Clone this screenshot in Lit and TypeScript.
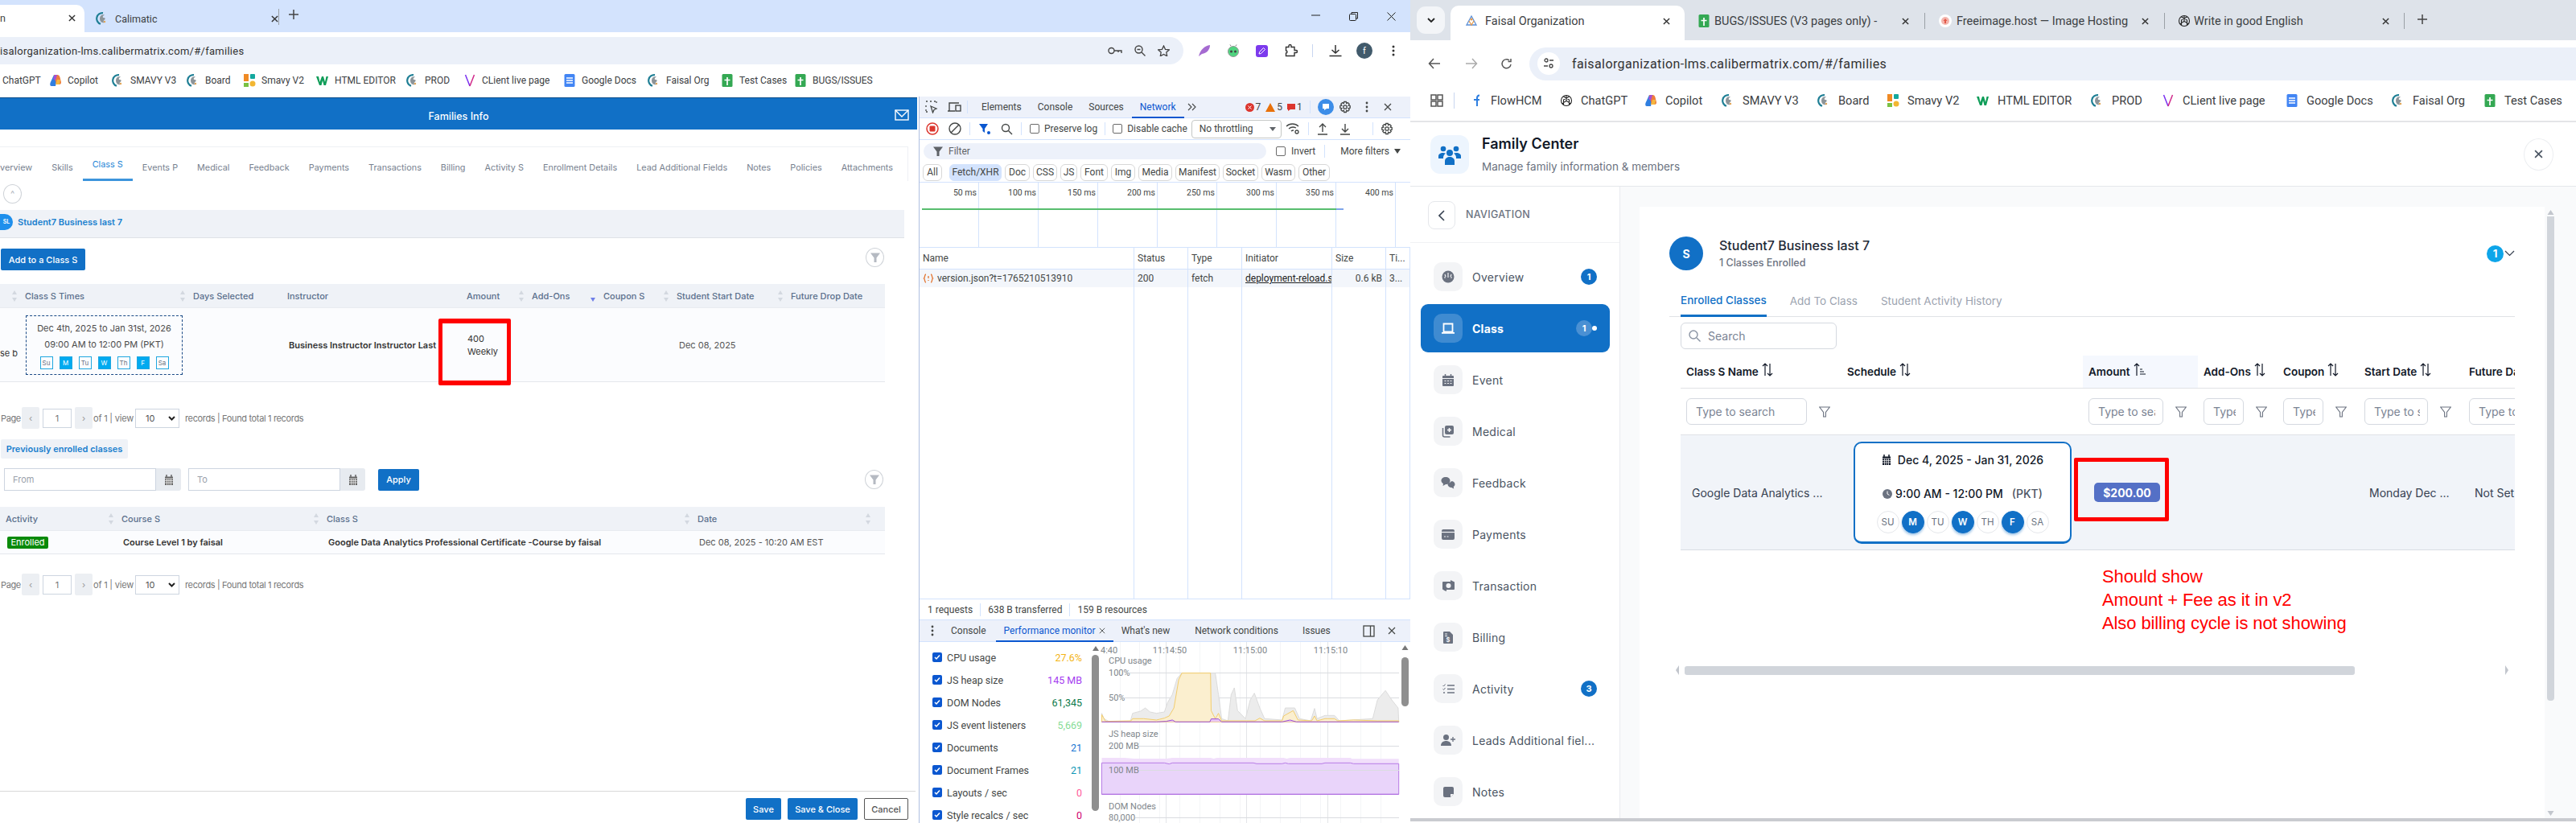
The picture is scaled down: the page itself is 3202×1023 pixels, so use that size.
import { LitElement, css, html, svg } from 'lit';
import { customElement } from 'lit/decorators.js';

// shared icons
const globe = html`<svg class="fav" viewBox="0 0 16 16"><path d="M9 1.2A7 7 0 0 0 6 14.8" fill="none" stroke="#1f7f95" stroke-width="2.2"/><path d="M11 3.5c-3-1-6 1-6 4.5s2.5 6 5.5 5c-1.5-1-1-2.500.5-3.500 1-1 1-2.500-1-2.500s-1.500-2.500 1-3.500z" fill="#8c9499"/><circle cx="11" cy="12" r="1.200" fill="#e0a458"/></svg>`;
const sheet = html`<svg class="fav" viewBox="0 0 16 16"><rect x="1.500" width="13" height="16" rx="1.500" fill="#34a853"/><path d="M8 4v10M4.500 7.500h7" stroke="#fff" stroke-width="1.700"/></svg>`;
const docs = html`<svg class="fav" viewBox="0 0 16 16"><rect x="1.500" width="13" height="16" rx="1.500" fill="#4285f4"/><path d="M4 5h8M4 8h8M4 11h8" stroke="#fff" stroke-width="1.500"/></svg>`;
const copilot = html`<svg class="fav" viewBox="0 0 16 16"><path d="M6 1h5l-3 14H3C1 15 1 13 1.500 11z" fill="#2f7fe0"/><path d="M6 1h4c2 0 3 1 3.500 3L15 10c.3 2-1 3-2.500 3H9z" fill="#ee7c3c"/><path d="M7 1h3L8 8 5 6z" fill="#a44fd6"/><path d="M10 7h4l-1 6H8z" fill="#f5b63f"/></svg>`;
const gpt = html`<svg class="fav" viewBox="0 0 16 16" fill="none" stroke="#222" stroke-width="1.100"><circle cx="8" cy="8" r="6.500"/><path d="M8 1.500v7l5.500 3M8 8.500l-5.500 3M4.500 3l7 4v6M11.500 3l-7 4v6"/></svg>`;
const smavy = html`<svg class="fav" viewBox="0 0 16 16"><rect x="1" width="6" height="9" fill="#f08a24"/><rect x="9" width="6" height="6" rx="1" fill="#13a89e"/><rect x="1" y="11" width="6" height="5" fill="#7ac143"/><circle cx="12" cy="12" r="3.500" fill="#f2b632"/></svg>`;
const wIcon = html`<svg class="fav" viewBox="0 0 16 16"><path d="M0 3h3l1.500 7L7 3h2l2 7 1.500-7H15l-3 11H9.500L8 8l-1.500 6H4z" fill="#0f9d58"/></svg>`;
const vIcon = html`<svg class="fav" viewBox="0 0 16 16" fill="none" stroke-width="1.500"><path d="M2.500 1L8 15" stroke="#7a2ff0"/><path d="M13.500 1L8 15" stroke="#d0298a"/></svg>`;
const flow = html`<svg class="fav" viewBox="0 0 16 16"><path d="M9 15V5c0-2 1-3.500 3-3.500M5 7h7" fill="none" stroke="#2f7fe0" stroke-width="2"/></svg>`;
const orgIcon = html`<svg class="fav" viewBox="0 0 16 16" fill="none" stroke-width="1.300"><path d="M8 2l6 11H2z" stroke="#5b8fd6"/><path d="M5 8l3 5 3-5" stroke="#e79a4a"/><circle cx="8" cy="6" r="1.600" fill="#e79a4a" stroke="none"/></svg>`;
const freeimg = html`<svg class="fav" viewBox="0 0 16 16"><circle cx="8" cy="8" r="8" fill="#fff"/><rect x="3" y="3" width="10" height="10" rx="5" fill="#f4b6ae"/><path d="M8 5l2.500 3H9v3H7V8H5.500z" fill="#e25a4a"/></svg>`;
const x = (size = 10, color = '#333', w = 1.6) => html`<svg width=${size} height=${size} viewBox="0 0 10 10" style="flex:none"><path d="M1 1l8 8M9 1l-8 8" stroke=${color} stroke-width=${w} fill="none"/></svg>`;
const funnel = (c = '#a9b0ba') => html`<svg width="14" height="14" viewBox="0 0 14 14"><path d="M1 1.500h12L8.500 7.500V13h-3V7.500z" fill=${c}/></svg>`;
const cal = (c = '#666') => html`<svg width="12" height="13" viewBox="0 0 12 13"><path d="M1 2.500h10V13H1z" fill=${c}/><path d="M3 0v3M9 0v3" stroke=${c} stroke-width="1.500"/><path d="M1 5h10M3.500 5v8M6 5v8M8.500 5v8M1 7.500h10M1 10h10" stroke="#fff" stroke-width=".7"/></svg>`;
const sort = (active = false) => html`<svg width="8" height="16" viewBox="0 0 8 16"><path d="M4 1l3 5H1z" fill=${active ? 'transparent' : '#d3d8e0'}/><path d="M4 15l3-5H1z" fill=${active ? '#6f7fe8' : '#d3d8e0'}/></svg>`;

type Mark = { label?: string; icon?: unknown; w: number };

const bookmarkBar = (items: Mark[], gap: number) => items.map(
    (b) => html`<div class="mark" style="width:${b.w}px;gap:${gap}px">${b.icon ?? ''}<span>${b.label}</span></div>`
);

const chromeStyles = css`
    .fav { width: 16px; height: 16px; flex: none; display: block; }
    .mark {
        display: flex;
        align-items: center;
        flex: none;
        font: 13px Roboto, sans-serif;
        color: #3c4043;
        white-space: nowrap;
    }
`;

@customElement('left-page')
class LeftPage extends LitElement {
    static styles = css`
        :host {
            display: flex;
            flex-direction: column;
            position: relative;
            width: 1142px;
            height: 903px;
            font-family: Inter, 'Liberation Sans', sans-serif;
            font-size: 11px;
            color: #4a5462;
            background: #fff;
            overflow: hidden;
        }

        .bar {
            height: 40px;
            flex: none;
            background: #1170c6;
            border-top: 1px solid #0d4f8d;
            box-sizing: border-box;
            margin-top: 1px;
            padding-top: 5px;
            display: grid;
            grid-template-columns: 1fr auto 1fr;
            align-items: center;
            color: #fff;
            font-size: 12.5px;
            font-weight: 500;
            margin-right: 2px;
        }

        .bar span { grid-column: 2; }
        .bar svg { justify-self: end; margin-right: 10px; margin-top: -3px; }

        .tabs {
            margin-top: 21px;
            height: 43px;
            width: 1129px;
            box-sizing: border-box;
            border-top: 1px solid #eef0f4;
            border-right: 1px solid #eef0f4;
            display: flex;
            gap: 24px;
            align-items: stretch;
            flex: none;
            white-space: nowrap;
            color: #77818f;
            font-size: 10.85px;
        }

        .tabs div {
            display: flex;
            align-items: center;
            padding-top: 8px;
            box-sizing: border-box;
            flex: none;
        }

        .tabs .on {
            color: #1f86d6;
            border-bottom: 3px solid #3d95dc;
            padding: 2px 12px 0;
            margin: 0 -12px;
        }

        .round {
            width: 23px;
            height: 24px;
            border: 1px solid #cfd3d8;
            border-radius: 50%;
            box-sizing: border-box;
            display: grid;
            place-items: center;
            color: #aab0b8;
            background: #fff;
            flex: none;
        }

        .collapse {
            height: 36px;
            padding: 4px 0 0 4px;
            box-sizing: border-box;
            flex: none;
        }

        .student {
            height: 35px;
            width: 1124px;
            flex: none;
            background: #eff2f7;
            border-bottom: 1px solid #dfe2e6;
            box-sizing: border-box;
            padding-bottom: 5px;
            display: flex;
            align-items: center;
            gap: 6px;
            color: #1a7fce;
            font-weight: 600;
            font-size: 11px;
        }

        .ava {
            width: 16px;
            height: 20px;
            background: #1e8fec;
            border-radius: 0 10px 10px 0;
            color: #fff;
            font-size: 7px;
            display: grid;
            place-items: center;
            flex: none;
        }

        .actions {
            height: 57px;
            flex: none;
            display: flex;
            justify-content: space-between;
            align-items: flex-start;
            padding: 13px 1px 0 1px;
            box-sizing: border-box;
            width: 1100px;
        }

        .btn {
            background: #1170c6;
            color: #fff;
            border-radius: 2px;
            display: grid;
            place-items: center;
            font-size: 11px;
            font-weight: 500;
            height: 27px;
            box-sizing: border-box;
        }

        .thead {
            display: grid;
            height: 30px;
            width: 1100px;
            flex: none;
            background: #eff2f7;
            border-bottom: 1px solid #e8ebf0;
            box-sizing: border-box;
            align-items: center;
            color: #5a6f8c;
            font-weight: 500;
            white-space: nowrap;
            font-size: 11px;
        }

        .thead > div { display: flex; align-items: center; }
        .thead .sorter { width: 19px; display: grid; justify-items: center; margin: 0 4px 0 -4px; flex: none; }
        .thead .back { margin: 0 4px 0 -23px; }
        .classes { grid-template-columns: 12px 209px 117px 223px 81px 89px 91px 142px 136px; }
        .prev { grid-template-columns: 7px 144px 255px 461px 225px 8px; }

        .row {
            display: grid;
            grid-template-columns: 32px 327px 222px 263px 1fr;
            align-items: center;
            width: 1100px;
            height: 92px;
            flex: none;
            background: #fbfcfe;
            border-bottom: 1px solid #e4e7ec;
            box-sizing: border-box;
            white-space: nowrap;
            color: #555;
        }

        .cut { overflow: hidden; color: #333; padding-top: 20px; }

        .sched {
            width: 195px;
            height: 74px;
            border: 1px dashed #1a4a86;
            box-sizing: border-box;
            display: flex;
            flex-direction: column;
            align-items: center;
            color: #4b4b4b;
            padding-top: 9px;
        }

        .sched p { margin: 0 0 7px; line-height: 13px; }

        .days { display: flex; gap: 8px; margin-top: 1px; }

        .days span {
            width: 16px;
            height: 16px;
            box-sizing: border-box;
            border: 1px solid #1fa7e0;
            display: grid;
            place-items: center;
            font-size: 8px;
            color: #6b7280;
        }

        .days .on { background: #00aaf0; color: #fff; }

        .instr { color: #333; font-weight: 600; overflow: hidden; max-width: 186px; }

        .amount { color: #333; line-height: 16px; }

        .pager {
            display: flex;
            align-items: center;
            height: 27px;
            flex: none;
            font-size: 11px;
            color: #777;
            white-space: nowrap;
            padding-left: 1px;
        }

        .pager .lead { width: 21px; overflow: visible; letter-spacing: -.4px; }
        .pager .view { width: 52px; letter-spacing: -.2px; }
        .pager .found { letter-spacing: -.35px; }

        .pager .arrow {
            width: 22px;
            height: 27px;
            background: #eceff3;
            border-radius: 2px;
            display: grid;
            place-items: center;
            color: #999;
            margin-left: 5px;
        }

        .pager .next { margin: 0 1px 0 4px; }

        .pager .num {
            width: 36px;
            height: 24px;
            border: 1px solid #cdd5e0;
            box-sizing: border-box;
            display: grid;
            place-items: center;
            margin: 0 0 0 4px;
        }

        .pager .sel {
            width: 55px;
            height: 24px;
            border: 1px solid #cdd5e0;
            box-sizing: border-box;
            display: flex;
            align-items: center;
            justify-content: space-between;
            padding: 0 4px 0 12px;
            margin: 0 7px 0 0;
            color: #555;
        }

        .pill {
            width: 158px;
            height: 24px;
            margin: 13px 0 12px 1px;
            background: #eff2f7;
            border-radius: 2px;
            color: #1a7fce;
            font-weight: 600;
            display: grid;
            place-items: center;
            flex: none;
            box-sizing: border-box;
        }

        .range {
            display: flex;
            height: 28px;
            flex: none;
            width: 1100px;
            padding-left: 5px;
            box-sizing: border-box;
            align-items: center;
        }

        .date {
            width: 189px;
            height: 28px;
            border: 1px solid #cdd5e0;
            box-sizing: border-box;
            color: #9aa1ab;
            display: flex;
            align-items: center;
            padding-left: 10px;
        }

        .addon {
            width: 31px;
            height: 28px;
            background: #e7ebf0;
            display: grid;
            place-items: center;
            border-radius: 0 3px 3px 0;
            margin-right: 9px;
        }

        .rowlow {
            display: grid;
            grid-template-columns: 9px 144px 255px 461px 1fr;
            width: 1100px;
            height: 29px;
            flex: none;
            align-items: center;
            background: #fbfcfe;
            border-bottom: 1px solid #e4e7ec;
            box-sizing: border-box;
            white-space: nowrap;
            color: #333;
            font-weight: 600;
        }

        .badge {
            width: 51px;
            height: 15px;
            background: #0a8a0a;
            border-radius: 2px;
            color: #fff;
            font-weight: 400;
            display: grid;
            place-items: center;
        }

        .foot {
            margin-top: auto;
            height: 40px;
            flex: none;
            border-top: 1px solid #d9d9d9;
            box-sizing: border-box;
            display: flex;
            justify-content: flex-end;
            gap: 8px;
            padding: 8px 9px 0 0;
            width: 1138px;
        }

        .ghost {
            background: #fff;
            color: #555;
            border: 1px solid #555;
        }

        .redbox {
            position: absolute;
            left: 545px;
            top: 276px;
            width: 90px;
            height: 83px;
            box-sizing: border-box;
            border: 5px solid #f00;
            border-top-width: 6px;
            border-bottom-width: 6px;
            border-radius: 2px;
        }
    `;

    pager() {
        return html`<div class="pager">
            <span class="lead">Page</span>
            <span class="arrow">‹</span><span class="num">1</span><span class="arrow next">›</span>
            <span class="view">of 1 | view</span>
            <span class="sel">10 <svg width="9" height="6" viewBox="0 0 9 6"><path d="M1 1l3.500 3.500L8 1" fill="none" stroke="#222" stroke-width="2"/></svg></span>
            <span class="found">records | Found total 1 records</span>
        </div>`;
    }

    render() {
        const tabs = ['Skills', 'Class S', 'Events P', 'Medical', 'Feedback', 'Payments', 'Transactions', 'Billing', 'Activity S', 'Enrollment Details', 'Lead Additional Fields', 'Notes', 'Policies', 'Attachments'];
        const days = [['Su', 0], ['M', 1], ['Tu', 0], ['W', 1], ['Th', 0], ['F', 1], ['Sa', 0]];
        return html`
            <div class="bar"><span>Families Info</span><svg width="18" height="14" viewBox="0 0 18 14" fill="none" stroke="#fff" stroke-width="1.400"><rect x="1" y="1" width="16" height="12"/><path d="M1 1l8 8 8-8"/></svg></div>
            <div class="tabs">
                <div>verview</div>
                ${tabs.map((t) => html`<div class=${t === 'Class S' ? 'on' : ''}>${t}</div>`)}
            </div>
            <div class="collapse"><div class="round">^</div></div>
            <div class="student"><div class="ava">SL</div>Student7 Business last 7</div>
            <div class="actions">
                <div class="btn" style="width:105px">Add to a Class S</div>
                <div class="round" style="margin-top:-1px">${funnel('#b5bac2')}</div>
            </div>
            <div class="thead classes">
                <div></div>
                <div><span class="sorter">${sort()}</span>Class S Times</div>
                <div><span class="sorter">${sort()}</span>Days Selected</div>
                <div><span class="sorter"></span>Instructor</div>
                <div><span class="sorter"></span>Amount</div>
                <div><span class="sorter">${sort()}</span>Add-Ons</div>
                <div><span class="sorter">${sort(true)}</span>Coupon S</div>
                <div><span class="sorter">${sort()}</span>Student Start Date</div>
                <div><span class="sorter">${sort()}</span>Future Drop Date</div>
            </div>
            <div class="row">
                <div class="cut">se b</div>
                <div class="sched">
                    <p>Dec 4th, 2025 to Jan 31st, 2026</p>
                    <p>09:00 AM to 12:00 PM (PKT)</p>
                    <div class="days">${days.map(([d, on]) => html`<span class=${on ? 'on' : ''}>${d}</span>`)}</div>
                </div>
                <div class="instr">Business Instructor Instructor Last</div>
                <div class="amount">400<br />Weekly</div>
                <div>Dec 08, 2025</div>
            </div>
            <div style="height:31px;flex:none"></div>
            ${this.pager()}
            <div class="pill">Previously enrolled classes</div>
            <div class="range">
                <div class="date">From</div><div class="addon">${cal()}</div>
                <div class="date">To</div><div class="addon" style="margin-right:16px">${cal()}</div>
                <div class="btn" style="width:51px">Apply</div>
                <div class="round" style="margin-left:auto;margin-right:2px">${funnel('#b5bac2')}</div>
            </div>
            <div style="height:20px;flex:none"></div>
            <div class="thead prev">
                <div></div>
                <div>Activity</div>
                <div><span class="sorter back">${sort()}</span>Course S</div>
                <div><span class="sorter back">${sort()}</span>Class S</div>
                <div><span class="sorter back">${sort()}</span>Date</div>
                <div><span class="sorter back">${sort()}</span></div>
            </div>
            <div class="rowlow">
                <div></div>
                <div class="badge">Enrolled</div>
                <div>Course Level 1 by faisal</div>
                <div>Google Data Analytics Professional Certificate -Course by faisal</div>
                <div style="font-weight:400;color:#555">Dec 08, 2025 - 10:20 AM EST</div>
            </div>
            <div style="height:24px;flex:none"></div>
            ${this.pager()}
            <div class="foot">
                <div class="btn" style="width:44px">Save</div>
                <div class="btn" style="width:87px">Save &amp; Close</div>
                <div class="btn ghost" style="width:55px">Cancel</div>
            </div>
            <div class="redbox"></div>
        `;
    }
}

@customElement('dev-tools')
class DevTools extends LitElement {
    static styles = css`
        :host {
            display: flex;
            flex-direction: column;
            width: 611px;
            height: 903px;
            box-sizing: border-box;
            border-left: 1px solid #aebfe0;
            font: 12px Roboto, sans-serif;
            color: #444746;
            background: #fff;
            overflow: hidden;
        }

        .strip {
            display: flex;
            align-items: center;
            flex: none;
            box-sizing: border-box;
            position: relative;
            white-space: nowrap;
        }

        .top { height: 27px; background: #edf1fa; border-bottom: 1px solid #d3e3fd; }
        .tool { height: 27px; border-bottom: 1px solid #d3e3fd; }
        .filter { height: 28px; }
        .chips { height: 25px; gap: 4px; padding-left: 4px; border-bottom: 1px solid #d3e3fd; }

        .cell { flex: none; display: flex; align-items: center; justify-content: center; }
        .sep { width: 1px; height: 16px; background: #d3e3fd; flex: none; }

        .dtab { padding: 0 10px; height: 27px; display: flex; align-items: center; box-sizing: border-box; }
        .dtab.on { color: #0b57d0; border-bottom: 2px solid #0b57d0; padding-top: 2px; }

        .check {
            width: 12px;
            height: 12px;
            border: 1px solid #6b6b6b;
            border-radius: 2px;
            box-sizing: border-box;
            flex: none;
        }

        .throttle {
            width: 112px;
            height: 23px;
            border: 1px solid #c4c7c5;
            border-radius: 4px;
            box-sizing: border-box;
            display: flex;
            align-items: center;
            justify-content: space-between;
            padding: 0 6px 0 9px;
            margin-left: 5px;
            flex: none;
        }

        .search {
            width: 426px;
            height: 20px;
            margin-left: 5px;
            background: #edf1fa;
            border-radius: 10px;
            display: flex;
            align-items: center;
            gap: 6px;
            padding-left: 11px;
            box-sizing: border-box;
            flex: none;
            color: #5f6368;
        }

        .chip {
            height: 21px;
            border: 1px solid #d8d8d8;
            border-radius: 6px;
            box-sizing: border-box;
            display: grid;
            place-items: center;
            flex: none;
        }

        .chip.on { background: #d3e3fd; border-color: #d3e3fd; margin-left: 5px; }

        .over {
            position: relative;
            display: grid;
            grid-template-columns: repeat(8, 74px);
            height: 81px;
            flex: none;
            border-bottom: 1px solid #d3e3fd;
            box-sizing: border-box;
            font-size: 10.5px;
        }

        .over div {
            border-right: 1px solid #d3e3fd;
            text-align: right;
            padding: 6px 2px 0 0;
        }

        .over i {
            position: absolute;
            top: 32px;
            height: 2px;
        }

        .grid {
            display: grid;
            grid-template-columns: 267px 67px 67px 112px 67px 1fr;
            flex: none;
            white-space: nowrap;
        }

        .grid > div {
            border-right: 1px solid #d3e3fd;
            padding-left: 4px;
            overflow: hidden;
            display: flex;
            align-items: center;
        }

        .head { height: 27px; border-bottom: 1px solid #d3e3fd; box-sizing: border-box; }
        .line { height: 22px; background: #f3f6fb; }
        .blank { flex: 1; }
        .status { height: 27px; border-top: 1px solid #d3e3fd; border-bottom: 1px solid #d3e3fd; gap: 9px; padding-left: 10px; }
        .drawer { height: 27px; background: #edf1fa; border-bottom: 1px solid #d3e3fd; }

        .perf { height: 225px; flex: none; display: flex; }
        .list { width: 214px; flex: none; padding-top: 5px; box-sizing: border-box; }

        .metric {
            height: 28px;
            display: flex;
            align-items: center;
            font-size: 12.5px;
            padding: 0 12px 0 16px;
        }

        .metric .tick {
            width: 12px;
            height: 12px;
            background: #0b57d0;
            border-radius: 2px;
            margin-right: 6px;
            display: grid;
            place-items: center;
            flex: none;
        }

        .metric b { margin-left: auto; font-weight: 400; }

        .thumb { width: 9px; flex: none; display: flex; flex-direction: column; align-items: center; padding-top: 5px; }
        .thumb i { display: block; width: 9px; height: 194px; margin-top: 5px; border-radius: 5px; background: #8f8f8f; }
    `;

    render() {
        const chips = [['All', 24], ['Fetch/XHR', 65], ['Doc', 31], ['CSS', 30], ['JS', 21], ['Font', 34], ['Img', 30], ['Media', 42], ['Manifest', 55], ['Socket', 44], ['Wasm', 42], ['Other', 39]];
        const stamps = ['50 ms', '100 ms', '150 ms', '200 ms', '250 ms', '300 ms', '350 ms', '400 ms'];
        const metrics = [
            ['CPU usage', '27.6%', '#f3b416'], ['JS heap size', '145 MB', '#a53df0'], ['DOM Nodes', '61,345', '#0d7a4b'], ['JS event listeners', '5,669', '#86dc96'],
            ['Documents', '21', '#1976d2'], ['Document Frames', '21', '#0e97b5'], ['Layouts / sec', '0', '#ff5a9a'], ['Style recalcs / sec', '0', '#d0006f'],
        ];
        const gear = html`<svg width="16" height="16" viewBox="0 0 16 16" fill="none" stroke="#444746" stroke-width="1.300"><circle cx="8" cy="8" r="2.200"/><path d="M6.700 1.500h2.600l.4 2 1.700-.9 1.800 1.800-1 1.700 2 .5v2.600l-2 .5 1 1.700-1.800 1.800-1.700-1-.4 2.300H6.700l-.4-2.300-1.700 1-1.800-1.800 1-1.700-2-.5V6.600l2-.5-1-1.700 1.800-1.800 1.700.9z"/></svg>`;
        return html`
            <div class="strip top">
                <span class="cell" style="width:16px;margin-left:7px"><svg width="16" height="16" viewBox="0 0 16 16" fill="none" stroke="#444746" stroke-width="1.300"><path d="M1 1h2M6 1h2M1 6v2M1 11v3h3M11 1h3v3" stroke-dasharray="2 1"/><path d="M7 7l7 3-3 1.500L9.500 15z"/></svg></span>
                <span class="cell" style="width:18px;margin-left:11px"><svg width="18" height="14" viewBox="0 0 18 14" fill="none" stroke="#444746" stroke-width="1.400"><path d="M1 12h9M3 12V2h12"/><rect x="11" y="5" width="6" height="7"/></svg></span>
                <span class="sep" style="margin:0 4px 0 7px"></span>
                <span class="dtab" style="padding-left:13px">Elements</span>
                <span class="dtab">Console</span>
                <span class="dtab">Sources</span>
                <span class="dtab on">Network</span>
                <svg style="margin-left:4px" width="11" height="10" viewBox="0 0 11 10" fill="none" stroke="#444746" stroke-width="1.100"><path d="M1 1l4 4-4 4M6 1l4 4-4 4"/></svg>
                <span style="margin-left:61px;display:flex;align-items:center;gap:2px"><svg width="11" height="11" viewBox="0 0 11 11"><circle cx="5.500" cy="5.500" r="5.500" fill="#dc362e"/><path d="M3.500 3.500l4 4M7.500 3.500l-4 4" stroke="#fff"/></svg>7</span>
                <span style="margin-left:6px;display:flex;align-items:center;gap:2px"><svg width="12" height="11" viewBox="0 0 12 11"><path d="M6 0l6 11H0z" fill="#e8710a"/></svg>5</span>
                <span style="margin-left:6px;display:flex;align-items:center;gap:2px"><svg width="10" height="11" viewBox="0 0 10 11"><path d="M0 1h10v7H4L1 10V8H0z" fill="#dc362e"/></svg>1</span>
                <span class="sep" style="margin:0 9px 0 9px"></span>
                <span class="cell" style="width:20px"><svg width="20" height="20" viewBox="0 0 20 20"><circle cx="10" cy="10" r="10" fill="#3c8de8"/><path d="M6 6h8v6l-3 0-3 2v-2H6z" fill="#fff"/></svg></span>
                <span class="cell" style="margin-left:6px">${gear}</span>
                <span class="cell" style="margin-left:17px"><svg width="4" height="14" viewBox="0 0 4 14" fill="#444746"><circle cx="2" cy="2" r="1.400"/><circle cx="2" cy="7" r="1.400"/><circle cx="2" cy="12" r="1.400"/></svg></span>
                <span class="cell" style="margin-left:19px">${x(10, '#444746', 1.3)}</span>
            </div>
            <div class="strip tool">
                <span class="cell" style="width:16px;margin-left:8px"><svg width="16" height="16" viewBox="0 0 16 16"><circle cx="8" cy="8" r="7" fill="none" stroke="#dc362e" stroke-width="1.500"/><rect x="4.500" y="4.500" width="7" height="7" rx="1" fill="#dc362e"/></svg></span>
                <span class="cell" style="width:16px;margin-left:12px"><svg width="16" height="16" viewBox="0 0 16 16" fill="none" stroke="#444746" stroke-width="1.400"><circle cx="8" cy="8" r="7"/><path d="M3 13L13 3"/></svg></span>
                <span class="sep" style="margin:0 10px"></span>
                <span class="cell"><svg width="16" height="16" viewBox="0 0 16 16" fill="#0b57d0"><path d="M1 2h11L8 8v5L5.500 11V8z"/><circle cx="13" cy="13" r="2"/></svg></span>
                <span class="cell" style="margin-left:12px"><svg width="15" height="15" viewBox="0 0 15 15" fill="none" stroke="#444746" stroke-width="1.400"><circle cx="6" cy="6" r="4.500"/><path d="M9.500 9.500L14 14"/></svg></span>
                <span class="sep" style="margin:0 10px"></span>
                <span class="check"></span><span style="margin-left:6px">Preserve log</span>
                <span class="sep" style="margin:0 9px"></span>
                <span class="check"></span><span style="margin-left:6px">Disable cache</span>
                <span class="throttle">No throttling <svg width="8" height="5" viewBox="0 0 8 5"><path d="M0 0h8L4 5z" fill="#5f6368"/></svg></span>
                <span class="cell" style="margin-left:5px"><svg width="18" height="14" viewBox="0 0 18 14" fill="none" stroke="#444746" stroke-width="1.300"><path d="M1 4c4-4 11-4 15 0M4 7c3-2.500 6-2.500 9-1M7 10c1-1 2-1 3-1"/><circle cx="14" cy="11" r="2"/></svg></span>
                <span class="sep" style="margin:0 10px"></span>
                <span class="cell"><svg width="14" height="15" viewBox="0 0 14 15" fill="none" stroke="#444746" stroke-width="1.400"><path d="M7 11V1M3 5l4-4 4 4M1 14h12"/></svg></span>
                <span class="cell" style="margin-left:14px"><svg width="14" height="15" viewBox="0 0 14 15" fill="none" stroke="#444746" stroke-width="1.400"><path d="M7 1v10M3 7l4 4 4-4M1 14h12"/></svg></span>
                <span class="sep" style="margin:0 0 0 27px"></span>
                <span class="cell" style="margin-left:9px">${gear}</span>
            </div>
            <div class="strip filter">
                <div class="search">${funnel('#5f6368')} Filter</div>
                <span class="check" style="margin-left:12px"></span><span style="margin-left:7px">Invert</span>
                <span class="sep" style="margin:0 19px 0 11px"></span>
                <span>More filters</span>
                <svg style="margin-left:6px" width="8" height="6" viewBox="0 0 8 6"><path d="M0 0h8L4 6z" fill="#444746"/></svg>
            </div>
            <div class="strip chips">
                ${chips.map(([label, w]) => html`<span class="chip ${label === 'Fetch/XHR' ? 'on' : ''}" style="width:${w}px">${label}</span>`)}
            </div>
            <div class="over">
                ${stamps.map((s) => html`<div>${s}</div>`)}
                <i style="left:3px;width:515px;background:#58bd6e"></i>
                <i style="left:518px;width:9px;background:#7ea5ea"></i>
            </div>
            <div class="grid head">
                <div>Name</div><div>Status</div><div>Type</div><div>Initiator</div><div>Size</div><div>Ti...</div>
            </div>
            <div class="grid line">
                <div><svg width="14" height="12" viewBox="0 0 14 12" style="margin-right:4px" fill="none" stroke="#e3742f" stroke-width="1.300"><path d="M4 1C2 1 3 5 1.500 6 3 7 2 11 4 11M10 1c2 0 1 4 2.500 5C11 7 12 11 10 11M7 3v3M7 8v1"/></svg>version.json?t=1765210513910</div>
                <div>200</div><div>fetch</div>
                <div style="text-decoration:underline;color:#222">deployment-reload.service</div>
                <div style="justify-content:flex-end;padding-right:4px">0.6 kB</div>
                <div>3...</div>
            </div>
            <div class="grid blank">
                <div></div><div></div><div></div><div></div><div></div><div></div>
            </div>
            <div class="strip status">
                <span>1 requests</span><span class="sep"></span><span>638 B transferred</span><span class="sep"></span><span>159 B resources</span>
            </div>
            <div class="strip drawer">
                <span class="cell" style="margin-left:14px"><svg width="4" height="14" viewBox="0 0 4 14" fill="#444746"><circle cx="2" cy="2" r="1.400"/><circle cx="2" cy="7" r="1.400"/><circle cx="2" cy="12" r="1.400"/></svg></span>
                <span class="dtab" style="padding:0 12px 0 21px">Console</span>
                <span class="dtab on" style="gap:4px">Performance monitor ${x(8, '#444746', 1.100)}</span>
                <span class="dtab">What's new</span>
                <span class="dtab" style="padding:0 20px 0 21px">Network conditions</span>
                <span class="dtab">Issues</span>
                <span class="cell" style="margin-left:30px"><svg width="15" height="15" viewBox="0 0 15 15" fill="none" stroke="#444746" stroke-width="1.300"><rect x="1" y="1" width="13" height="13"/><path d="M9.500 1v13"/></svg></span>
                <span class="cell" style="margin-left:16px">${x(10, '#444746', 1.2)}</span>
            </div>
            <div class="perf">
                <div class="list">
                    ${metrics.map(([l, v, c]) => html`<div class="metric">
                        <span class="tick"><svg width="10" height="10" viewBox="0 0 10 10"><path d="M2 5l2 2 4-4.500" fill="none" stroke="#fff" stroke-width="1.500"/></svg></span>
                        <span>${l}</span><b style="color:${c}">${v}</b>
                    </div>`)}
                </div>
                <div class="thumb"><svg width="8" height="6" viewBox="0 0 8 6"><path d="M4 0l4 6H0z" fill="#777"/></svg><i></i></div>
                ${this.graph()}
            </div>
        `;
    }

    graph() {
        const times = [['4:40', 1367], ['11:14:50', 1453], ['11:15:00', 1553], ['11:15:10', 1653]];
        const ox = 1365;
        const oy = 798;
        const label = (t: string, gx: number, gy: number, anchor = 'start') => svg`<text x=${gx - ox} y=${gy - oy + 4} font-size="11" fill="#80868b" text-anchor=${anchor}>${t}</text>`;
        const hline = (gy: number, from: number) => svg`<path d="M${from - ox} ${gy - oy + .5}H${1738 - ox}" stroke="#dadce0"/>`;
        return html`<svg width="388" height="225" viewBox="0 0 388 225" style="flex:none;display:block;font-family:Roboto,sans-serif">
            ${[1391, 1415, 1440, 1465, 1490, 1515, 1540, 1565, 1590, 1615, 1640, 1665, 1690, 1715].map((g) => svg`<path d="M${g - ox + .5} 0V225" stroke="#f4f5f7"/>`)}
            ${[1448, 1548, 1649].map((g) => svg`<path d="M${g - ox + .5} 0V225" stroke="#e3e5e8"/>`)}
            ${times.map(([t, g]) => label(t as string, +g, 808, g === 1367 ? 'start' : 'middle'))}
            ${label('CPU usage', 1377, 821)}
            ${hline(836, 1403)}${hline(867, 1397)}
            ${label('100%', 1377, 836)}${label('50%', 1377, 867)}
            <g transform="translate(-225 -68) scale(.3953 .3333)">
                <path vector-effect="non-scaling-stroke" d="M578 502L578 470 585 490 600 500 668 500 675 470 700 462 715 450 730 465 750 470 775 465 785 430 800 400 815 340 830 320 935 320 945 400 955 490 975 498 985 400 995 375 1005 460 1030 490 1045 420 1058 395 1075 450 1090 490 1145 495 1155 450 1185 450 1200 490 1235 498 1247 452 1255 490 1280 478 1310 478 1325 498 1365 495 1430 490 1445 420 1470 385 1490 420 1510 450 1512 502Z" fill="#ececec" stroke="#dcdcdc"/>
                <path vector-effect="non-scaling-stroke" d="M578 502L578 475 590 500 670 498 675 490 710 490 750 495 775 488 790 480 805 450 820 345 830 320 920 320 922 460 935 490 945 470 955 498 1060 498 1075 488 1090 498 1145 498 1150 480 1180 460 1195 495 1238 498 1247 480 1255 498 1280 490 1310 490 1320 498 1370 495 1445 498 1512 498 1512 502Z" fill="#fbefcf" stroke="#f3cd6d"/>
                <path vector-effect="non-scaling-stroke" d="M578 502H750L780 500 800 495 810 502H918L922 491 945 491 955 502H1145L1170 495 1190 502H1512" fill="#e9c7f5" stroke="#9b4fd3"/>
                <path d="M578 636H650L680 639H780L800 636H920L930 639 940 636H1150L1160 639 1170 636H1360L1365 640H1512V772H578Z" fill="#f1dffb"/>
                <path vector-effect="non-scaling-stroke" d="M578 655H775L790 659 800 655H1055L1065 658H1145L1155 655 1165 658H1270L1280 655H1360L1370 658H1512V772H578Z" fill="#e9d4fa" stroke="#b77be6"/>
                <path vector-effect="non-scaling-stroke" d="M578 772H1512" stroke="#b06fe2" fill="none"/>
            </g>
            ${label('JS heap size', 1377, 912)}
            ${hline(927, 1413)}${hline(957, 1413)}
            ${label('200 MB', 1377, 927)}${label('100 MB', 1377, 957)}
            ${label('DOM Nodes', 1377, 1002)}
            ${hline(1016, 1410)}
            ${label('80,000', 1377, 1016)}
            <path d="M${1741 - ox + 4.500} 4l4 6h-8z" fill="#777"/>
            <rect x=${1741 - ox} y=${817 - oy} width="9" height="61" rx="4.500" fill="#8f8f8f"/>
        </svg>`;
    }
}

@customElement('family-center')
class FamilyCenter extends LitElement {
    static styles = css`
        :host {
            display: flex;
            flex-direction: column;
            position: relative;
            width: 1449px;
            height: 1023px;
            font-family: Inter, 'Liberation Sans', sans-serif;
            background: #fff;
            overflow: hidden;
            flex: none;
        }

        ${chromeStyles}

        .strip {
            height: 50px;
            flex: none;
            background: #dee3ea;
            display: flex;
            align-items: flex-end;
            box-sizing: border-box;
            padding-left: 8px;
            font: 14.5px Roboto, sans-serif;
            color: #3c4043;
            white-space: nowrap;
        }

        .down {
            width: 35px;
            height: 34px;
            margin: 0 7px 8px 0;
            background: #f3f5f8;
            border-radius: 11px;
            display: grid;
            place-items: center;
            flex: none;
        }

        .tab { height: 43px; display: flex; align-items: center; flex: none; box-sizing: border-box; gap: 7px; padding-bottom: 5px !important; }
        .tab.on { width: 291px; background: #fff; border-radius: 10px 10px 0 0; padding: 0 18px; }
        .tab .name { flex: 1; overflow: hidden; }
        .tsep { width: 1px; height: 20px; background: #9aa0a6; margin-bottom: 14px; flex: none; }

        .addr {
            height: 50px;
            flex: none;
            display: flex;
            align-items: center;
            padding: 8px 0 0 22px;
            box-sizing: border-box;
        }

        .pillbar {
            flex: 1;
            height: 41px;
            margin-left: 21px;
            background: #ebf0f9;
            border-radius: 21px 0 0 21px;
            display: flex;
            align-items: center;
            padding-left: 10px;
            gap: 15px;
            font: 16px Roboto, sans-serif;
            letter-spacing: .4px;
            color: #333;
            margin-top: 0;
        }

        .site {
            width: 28px;
            height: 28px;
            background: #fff;
            border-radius: 50%;
            display: grid;
            place-items: center;
            flex: none;
        }

        .marks {
            height: 50px;
            flex: none;
            display: flex;
            align-items: center;
            padding-left: 25px;
            box-sizing: border-box;
            overflow: hidden;
        }

        .marks .mark { font-size: 14.6px; }

        .line { height: 2px; flex: none; background: #e4e5e7; }

        .head {
            height: 80px;
            flex: none;
            display: flex;
            align-items: center;
            padding: 0 28px 0 25px;
            border-bottom: 1px solid #e5e7eb;
            box-sizing: border-box;
        }

        .logo {
            width: 48px;
            height: 48px;
            background: #edf5fe;
            border-radius: 12px;
            display: grid;
            place-items: center;
            margin-right: 16px;
        }

        .head h1 { margin: 0 0 9px; font-size: 18px; line-height: 22px; font-weight: 600; color: #111827; }
        .head p { margin: 0; font-size: 13.5px; line-height: 17px; color: #6b7280; white-space: nowrap; }

        .close {
            margin-left: auto;
            width: 37px;
            height: 40px;
            border: 1px solid #eceef1;
            border-radius: 50%;
            display: grid;
            place-items: center;
            box-sizing: border-box;
        }

        .body { flex: 1; display: flex; min-height: 0; }

        .side {
            width: 261px;
            flex: none;
            border-right: 1px solid #e9ebef;
            box-sizing: border-box;
        }

        .navhead {
            height: 70px;
            padding: 18px 0 0 22px;
            box-sizing: border-box;
            display: flex;
            gap: 13px;
            border-bottom: 1px solid #f0f1f4;
            font-size: 12.5px;
            font-weight: 500;
            letter-spacing: .3px;
            color: #6b7280;
        }

        .backbtn {
            width: 34px;
            height: 35px;
            border: 1px solid #e5e7eb;
            border-radius: 8px;
            box-sizing: border-box;
            display: grid;
            place-items: center;
        }

        .navlist { display: flex; flex-direction: column; gap: 4px; padding: 12px 0 0 13px; }

        .item {
            width: 235px;
            height: 60px;
            display: flex;
            align-items: center;
            padding: 0 16px;
            box-sizing: border-box;
            border-radius: 9px;
            color: #4b5563;
            font-size: 14px;
            letter-spacing: .25px;
            white-space: nowrap;
        }

        .icon {
            width: 36px;
            height: 36px;
            border-radius: 10px;
            background: #f3f4f6;
            display: grid;
            place-items: center;
            margin-right: 12px;
            flex: none;
        }

        .count {
            margin-left: auto;
            width: 20px;
            height: 20px;
            border-radius: 50%;
            background: #1170c6;
            color: #fff;
            font-size: 11px;
            font-weight: 700;
            display: grid;
            place-items: center;
            letter-spacing: 0;
            flex: none;
        }

        .item.on { background: #1170c6; color: #fff; font-weight: 700; }
        .item.on .icon { background: #3f8bd1; }
        .item.on .count { background: #4a90d3; margin-left: auto; }
        .dot { width: 6px; height: 6px; border-radius: 50%; background: #fff; flex: none; }

        .main {
            flex: 1;
            background: #f9fafb;
            padding: 25px 0 0 24px;
            display: flex;
            min-width: 0;
        }

        .card {
            width: 1125px;
            flex: none;
            background: #fff;
            padding: 37px 37px 0;
            box-sizing: border-box;
        }

        .who { display: flex; align-items: center; height: 42px; }

        .avatar {
            width: 42px;
            height: 42px;
            border-radius: 50%;
            background: #1170c6;
            color: #fff;
            font-weight: 700;
            font-size: 14px;
            display: grid;
            place-items: center;
            margin-right: 20px;
        }

        .who h2 { margin: 0 0 4px; font-size: 16px; line-height: 20px; font-weight: 500; color: #1f2937; }
        .who p { margin: 0; font-size: 12.5px; line-height: 16px; color: #6b7280; font-weight: 500; }

        .one {
            margin-left: auto;
            width: 21px;
            height: 21px;
            border-radius: 50%;
            background: #0ea5e9;
            color: #fff;
            font-size: 13px;
            font-weight: 700;
            display: grid;
            place-items: center;
        }

        .subtabs {
            margin-top: 19px;
            height: 39px;
            border-bottom: 1px solid #e0e2e6;
            box-sizing: border-box;
            display: flex;
            gap: 29px;
            padding-left: 14px;
            font-size: 13.5px;
            color: #9ca3af;
            white-space: nowrap;
        }

        .subtabs span { display: flex; align-items: center; height: 38px; padding-bottom: 0; box-sizing: border-box; }
        .subtabs .on { color: #1170c6; border-bottom: 3px solid #1170c6; font-weight: 500; height: 39px; }

        .box {
            border: 1px solid #d5d9e0;
            border-radius: 6px;
            box-sizing: border-box;
            height: 33px;
            display: flex;
            align-items: center;
            font-size: 14px;
            color: #7b8494;
            white-space: nowrap;
            flex: none;
        }

        .box span { overflow: hidden; flex: 1; }

        .find { width: 194px; margin: 7px 0 8px 14px; padding-left: 9px; gap: 9px; }

        .table { margin-left: 14px; width: 1037px; overflow: hidden; }

        .cols {
            display: grid;
            grid-template-columns: 200px 300px 143px 99px 101px 130px 64px;
        }

        .hrow { height: 41px; border-bottom: 1px solid #e0e2e6; box-sizing: border-box; }

        .hrow div {
            display: flex;
            align-items: center;
            padding-left: 7px;
            gap: 4px;
            font-size: 13.5px;
            font-weight: 600;
            color: #111827;
            white-space: nowrap;
            overflow: hidden;
        }

        .hrow .lit { background: #f5f8fe; }

        .frow { height: 58px; border-bottom: 1px solid #e0e2e6; box-sizing: border-box; }

        .frow div {
            display: flex;
            align-items: center;
            padding-left: 7px;
            gap: 15px;
            overflow: hidden;
        }

        .frow .box { padding: 0 9px 0 11px; }

        .drow {
            height: 143px;
            background: #f1f4f9;
            border-bottom: 1px solid #d9dce3;
            box-sizing: border-box;
            align-items: center;
            font-size: 14px;
            color: #374151;
            white-space: nowrap;
        }

        .drow > div { overflow: hidden; padding-left: 14px; box-sizing: border-box; }
        .drow .schedcell { overflow: visible; padding-left: 15px; }

        .slot {
            width: 271px;
            height: 127px;
            background: #fff;
            border: 2px solid #1170c6;
            border-bottom-width: 3px;
            border-radius: 10px;
            box-sizing: border-box;
            display: flex;
            flex-direction: column;
            align-items: center;
            padding-top: 11px;
            color: #111827;
            font-weight: 500;
            font-size: 14px;
        }

        .slot p { margin: 0; height: 20px; display: flex; align-items: center; gap: 8px; }
        .slot .gaps { margin-top: 22px; }
        .slot .muted { color: #4b5563; margin-left: 3px; }

        .circles { display: flex; gap: 3px; margin-top: 11px; }

        .circles span {
            width: 28px;
            height: 28px;
            border-radius: 50%;
            border: 1px solid #e5e7eb;
            box-sizing: border-box;
            display: grid;
            place-items: center;
            font-size: 11.5px;
            font-weight: 400;
            color: #6b7280;
        }

        .circles .on { background: #1170c6; border-color: #1170c6; color: #fff; font-weight: 600; box-shadow: 0 2px 3px rgba(17, 112, 198, .4); }

        .price {
            display: inline-grid;
            place-items: center;
            width: 82px;
            height: 24px;
            background: #5470c6;
            color: #fff;
            border-radius: 5px;
            font-size: 14px;
            font-weight: 700;
        }

        .scroll {
            display: flex;
            align-items: center;
            margin-top: 143px;
            margin-left: 8px;
            width: 1035px;
            justify-content: space-between;
        }

        .scroll i { display: block; width: 833px; height: 11px; background: #d1d5db; border-radius: 3px; margin-left: 7px; margin-right: auto; }

        .rail {
            width: 12px;
            flex: 1;
            display: flex;
            flex-direction: column;
            align-items: flex-start;
            margin-left: 3px;
            height: 100%;
            box-sizing: border-box;
            padding-top: 4px;
        }

        .rail i { display: block; width: 9px; height: 602px; background: #d1d5db; border-radius: 0 0 4px 4px; margin-top: 2px; }
        .rail svg:last-child { margin-top: auto; margin-bottom: 3px; }

        .ground { height: 4px; flex: none; background: #c9cbd0; }

        .redbox {
            position: absolute;
            left: 825px;
            top: 569px;
            width: 118px;
            height: 79px;
            box-sizing: border-box;
            border: 5px solid #f00;
            border-radius: 2px;
        }

        .note {
            position: absolute;
            left: 860px;
            top: 702px;
            color: #f00;
            font: 22px/29px 'Liberation Sans', sans-serif;
            letter-spacing: -.1px;
            white-space: nowrap;
        }
    `;

    render() {
        const marks: Mark[] = [
            { label: 'FlowHCM', icon: flow, w: 112 }, { label: 'ChatGPT', icon: gpt, w: 105 }, { label: 'Copilot', icon: copilot, w: 96 },
            { label: 'SMAVY V3', icon: globe, w: 119 }, { label: 'Board', icon: globe, w: 86 }, { label: 'Smavy V2', icon: smavy, w: 112 },
            { label: 'HTML EDITOR', icon: wIcon, w: 142 }, { label: 'PROD', icon: globe, w: 88 }, { label: 'CLient live page', icon: vIcon, w: 154 },
            { label: 'Google Docs', icon: docs, w: 132 }, { label: 'Faisal Org', icon: globe, w: 114 }, { label: 'Test Cases', icon: sheet, w: 110 },
        ];
        const g = '#6b7280';
        const nav = [
            { label: 'Overview', count: '1', icon: html`<svg width="16" height="16" viewBox="0 0 16 16"><circle cx="8" cy="8" r="7.500" fill=${g}/><path d="M8 3v6M4 5l1 3M12 5l-1 3M3 9h2M11 9h2" stroke="#f3f4f6" stroke-width="1.200"/></svg>` },
            { label: 'Class', count: '1', on: true, icon: html`<svg width="16" height="14" viewBox="0 0 16 14"><path d="M2.500 1.500h11v10h-11z" fill="none" stroke="#fff" stroke-width="1.800"/><path d="M0 12h16v1.800H0z" fill="#fff"/></svg>` },
            { label: 'Event', icon: html`<svg width="14" height="15" viewBox="0 0 14 15"><path d="M1 2h12a1 1 0 0 1 1 1v11a1 1 0 0 1-1 1H1a1 1 0 0 1-1-1V3a1 1 0 0 1 1-1z" fill=${g}/><path d="M3.500 0v3M10.500 0v3" stroke=${g} stroke-width="1.500"/><path d="M0 5.500h14M2.500 8.500h2M6 8.500h2M9.500 8.500h2M2.500 11.500h2M6 11.500h2M9.500 11.500h2" stroke="#f3f4f6" stroke-width="1.200"/></svg>` },
            { label: 'Medical', icon: html`<svg width="16" height="16" viewBox="0 0 16 16"><path d="M1.500 4v9a2 2 0 0 0 2 2h7" fill="none" stroke=${g} stroke-width="1.500"/><rect x="4" y="1" width="11" height="11" rx="2" fill=${g}/><path d="M9.500 4v5M7 6.500h5" stroke="#fff" stroke-width="1.500"/></svg>` },
            { label: 'Feedback', icon: html`<svg width="18" height="15" viewBox="0 0 18 15" fill=${g}><path d="M6 0c3.300 0 5.500 2 5.500 4.500S9.300 9 6 9L2.500 11 3 8.200C1.500 7.400.5 6 .5 4.500.5 2 2.700 0 6 0z"/><path d="M13 5c2.800 0 4.500 1.700 4.500 4 0 1.300-.7 2.400-1.800 3.100l.5 2.400-3-1.500c-2.700 0-4.700-1.700-4.700-4 0-.6.1-1.100.4-1.500 2 0 3-1.500 4.600-2.500z"/></svg>` },
            { label: 'Payments', icon: html`<svg width="16" height="13" viewBox="0 0 16 13"><rect width="16" height="13" rx="2" fill=${g}/><path d="M0 3.500h16" stroke="#f3f4f6" stroke-width="1.200"/><path d="M3 9h2M6.500 9h2" stroke="#f3f4f6"/></svg>` },
            { label: 'Transaction', icon: html`<svg width="17" height="14" viewBox="0 0 17 14" fill=${g}><rect x="1" y="2" width="15" height="10" rx="1"/><circle cx="8.500" cy="7" r="3" fill="#f3f4f6"/><path d="M11 0l4 2-4 1.500zM6 11l-4 1.500L6 14z"/></svg>` },
            { label: 'Billing', icon: html`<svg width="12" height="15" viewBox="0 0 12 15"><path d="M1 0h7l4 4v10a1 1 0 0 1-1 1H1a1 1 0 0 1-1-1V1a1 1 0 0 1 1-1z" fill=${g}/><path d="M2 3h3M2 5.500h3" stroke="#f3f4f6"/><text x="6" y="12.500" font-size="7.500" font-weight="700" fill="#f3f4f6" text-anchor="middle">$</text></svg>` },
            { label: 'Activity', count: '3', icon: html`<svg width="15" height="13" viewBox="0 0 15 13" fill="none" stroke=${g} stroke-width="1.500"><path d="M6 2h9M6 6.500h9M6 11h9"/><path d="M.5 2l1 1L3.500.5M.5 6.500l1 1 2-2.500" stroke-width="1"/><circle cx="2" cy="11" r="1" fill=${g} stroke="none"/></svg>` },
            { label: 'Leads Additional fiel...', icon: html`<svg width="18" height="14" viewBox="0 0 18 14" fill=${g}><circle cx="6.500" cy="3.500" r="3.500"/><path d="M0 14c0-4 3-6 6.500-6s6.500 2 6.500 6z"/><path d="M15 3v6M12 6h6" stroke=${g} stroke-width="1.300"/></svg>` },
            { label: 'Notes', icon: html`<svg width="13" height="13" viewBox="0 0 13 13"><path d="M2 0h9a2 2 0 0 1 2 2v7l-4 4H2a2 2 0 0 1-2-2V2a2 2 0 0 1 2-2z" fill=${g}/><path d="M9 13V9h4" fill="#f3f4f6"/></svg>` },
        ];
        const sortMark = html`<svg width="14" height="17" viewBox="0 0 14 17" fill="none" stroke="#111827" stroke-width="1.200" style="margin-top:-5px;flex:none"><path d="M4 16V1M1 4l3-3 3 3"/><path d="M10 1v15M7 13l3 3 3-3"/></svg>`;
        const filt = html`<svg width="14" height="14" viewBox="0 0 14 14" fill="none" stroke="#6b7280" stroke-width="1.100" style="flex:none"><path d="M.7 1h12.600L8.400 7.500v5.500H5.600V7.500z"/></svg>`;
        const days = [['SU', 0], ['M', 1], ['TU', 0], ['W', 1], ['TH', 0], ['F', 1], ['SA', 0]];
        const filterCell = (w: number) => html`<div><span class="box" style="width:${w}px"><span>Type to search</span></span>${filt}</div>`;
        return html`
            <div class="strip">
                <div class="down"><svg width="10" height="7" viewBox="0 0 10 7"><path d="M1 1l4 4 4-4" fill="none" stroke="#222" stroke-width="1.800"/></svg></div>
                <div class="tab on">${orgIcon}<span class="name" style="margin-left:2px">Faisal Organization</span>${x(9)}</div>
                <div class="tab" style="width:298px;padding:0 19px 0 16px;gap:5px">${sheet}<span class="name">BUGS/ISSUES (V3 pages only) -</span>${x(9)}</div>
                <div class="tsep"></div>
                <div class="tab" style="width:297px;padding:0 19px 0 17px;gap:6px">${freeimg}<span class="name">Freeimage.host — Image Hosting</span>${x(9)}</div>
                <div class="tsep"></div>
                <div class="tab" style="width:297px;padding:0 18px 0 16px;gap:4px">${gpt}<span class="name">Write in good English</span>${x(9)}</div>
                <div class="tsep"></div>
                <div style="margin:0 0 16px 16px"><svg width="12" height="12" viewBox="0 0 12 12"><path d="M6 0v12M0 6h12" stroke="#444" stroke-width="1.500"/></svg></div>
            </div>
            <div class="addr">
                <svg width="16" height="14" viewBox="0 0 16 14" fill="none" stroke="#555" stroke-width="1.500"><path d="M15 7H2M7 1L1.500 7 7 13"/></svg>
                <svg style="margin-left:30px" width="16" height="14" viewBox="0 0 16 14" fill="none" stroke="#aaa" stroke-width="1.500"><path d="M1 7h13M9 1l5.500 6L9 13"/></svg>
                <svg style="margin-left:28px" width="15" height="15" viewBox="0 0 15 15" fill="none" stroke="#555" stroke-width="1.500"><path d="M13 8a5.500 5.500 0 1 1-2-5M13 1v3.500H9.500"/></svg>
                <div class="pillbar">
                    <span class="site"><svg width="14" height="16" viewBox="0 0 14 16" fill="none" stroke="#444" stroke-width="1.300"><circle cx="4" cy="4" r="2"/><path d="M8 4h5M1 11h5"/><circle cx="10" cy="11" r="2"/></svg></span>
                    faisalorganization-lms.calibermatrix.com/#/families
                </div>
            </div>
            <div class="marks">
                <svg width="16" height="16" viewBox="0 0 16 16" fill="none" stroke="#555" stroke-width="1.500" style="flex:none"><rect x="1" y="1" width="6" height="6"/><rect x="9" y="1" width="6" height="6"/><rect x="1" y="9" width="6" height="6"/><rect x="9" y="9" width="6" height="6"/></svg>
                <span style="width:1px;height:20px;background:#c8d6f0;margin:0 19px 0 13px;flex:none"></span>
                ${bookmarkBar(marks, 10)}
            </div>
            <div class="line"></div>
            <div class="head">
                <div class="logo"><svg width="28" height="26" viewBox="0 0 28 26" fill="#1170c6"><circle cx="14" cy="11" r="4"/><circle cx="6" cy="6" r="3.300"/><circle cx="22" cy="6" r="3.300"/><path d="M8 26v-5c0-3 3-5 6-5s6 2 6 5v5z"/><path d="M0 18v-3c0-2 2-4 6-4 1 0 2 .2 3 .6C7 13 6 15 6 17v1zM28 18v-3c0-2-2-4-6-4-1 0-2 .2-3 .6 2 1.400 3 3.400 3 5.400v1z"/></svg></div>
                <div>
                    <h1>Family Center</h1>
                    <p>Manage family information &amp; members</p>
                </div>
                <div class="close">${x(11, '#4b5563', 1.5)}</div>
            </div>
            <div class="body" style="height:785px;flex:none">
                <div class="side">
                    <div class="navhead">
                        <div class="backbtn"><svg width="8" height="14" viewBox="0 0 8 14" fill="none" stroke="#374151" stroke-width="1.600"><path d="M7 1L1 7l6 6"/></svg></div>
                        <span style="padding-top:9px">NAVIGATION</span>
                    </div>
                    <div class="navlist">
                        ${nav.map((n) => html`<div class="item ${n.on ? 'on' : ''}">
                            <span class="icon">${n.icon}</span>
                            <span>${n.label}</span>
                            ${n.count ? html`<span class="count">${n.count}</span>` : ''}
                            ${n.on ? html`<span class="dot"></span>` : ''}
                        </div>`)}
                    </div>
                </div>
                <div class="main">
                    <div class="card">
                        <div class="who">
                            <div class="avatar">S</div>
                            <div>
                                <h2>Student7 Business last 7</h2>
                                <p>1 Classes Enrolled</p>
                            </div>
                            <div class="one">1</div>
                            <svg style="margin-left:1px" width="13" height="8" viewBox="0 0 13 8" fill="none" stroke="#374151" stroke-width="1.200"><path d="M1 1l5.500 5.500L12 1"/></svg>
                        </div>
                        <div class="subtabs">
                            <span class="on">Enrolled Classes</span>
                            <span>Add To Class</span>
                            <span>Student Activity History</span>
                        </div>
                        <div class="box find"><svg width="15" height="15" viewBox="0 0 15 15" fill="none" stroke="#8a93a3" stroke-width="1.400"><circle cx="6" cy="6" r="5"/><path d="M10 10l4.500 4.500"/></svg>Search</div>
                        <div class="table">
                            <div class="cols hrow">
                                <div>Class S Name ${sortMark}</div>
                                <div>Schedule ${sortMark}</div>
                                <div class="lit">Amount <svg width="16" height="17" viewBox="0 0 16 17" fill="none" stroke="#111827" stroke-width="1.200" style="margin-top:-5px;flex:none"><path d="M4 16V1M1 4l3-3 3 3M8 8h3M8 11h5M8 14h7"/></svg></div>
                                <div>Add-Ons ${sortMark}</div>
                                <div>Coupon ${sortMark}</div>
                                <div>Start Date ${sortMark}</div>
                                <div>Future Date</div>
                            </div>
                            <div class="cols frow">
                                ${filterCell(150)}
                                <div></div>
                                ${filterCell(93)}
                                ${filterCell(50)}
                                ${filterCell(50)}
                                ${filterCell(79)}
                                ${filterCell(79)}
                            </div>
                            <div class="cols drow">
                                <div>Google Data Analytics ...</div>
                                <div class="schedcell">
                                    <div class="slot">
                                        <p>${cal('#111827')} Dec 4, 2025 - Jan 31, 2026</p>
                                        <p class="gaps"><svg width="12" height="12" viewBox="0 0 12 12"><circle cx="6" cy="6" r="6" fill="#6b7280"/><path d="M6 2.500V6l2.500 1.500" fill="none" stroke="#fff"/></svg><span style="margin-left:-4px">9:00 AM - 12:00 PM</span><span class="muted">(PKT)</span></p>
                                        <div class="circles">${days.map(([d, on]) => html`<span class=${on ? 'on' : ''}>${d}</span>`)}</div>
                                    </div>
                                </div>
                                <div><span class="price">$200.00</span></div>
                                <div></div>
                                <div></div>
                                <div style="padding-left:13px">Monday Dec ...</div>
                                <div>Not Set</div>
                            </div>
                        </div>
                        <div class="scroll">
                            <svg width="4" height="12" viewBox="0 0 4 12"><path d="M4 0v12L0 6z" fill="#c2c6cd"/></svg>
                            <i></i>
                            <svg width="4" height="12" viewBox="0 0 4 12"><path d="M0 0v12l4-6z" fill="#c2c6cd"/></svg>
                        </div>
                    </div>
                    <div class="rail">
                        <svg width="9" height="6" viewBox="0 0 9 6"><path d="M4.500 0l4 6h-8z" fill="#c2c6cd"/></svg>
                        <i></i>
                        <svg width="9" height="6" viewBox="0 0 9 6"><path d="M4.500 6l4-6h-8z" fill="#c2c6cd"/></svg>
                    </div>
                </div>
            </div>
            <div class="ground"></div>
            <div class="redbox"></div>
            <div class="note">Should show<br />Amount + Fee as it in v2<br />Also billing cycle is not showing</div>
        `;
    }
}

@customElement('app-root')
class AppRoot extends LitElement {
    static styles = css`
        :host {
            display: flex;
            width: 3202px;
            height: 1023px;
            overflow: hidden;
            background: #fff;
        }

        ${chromeStyles}

        .win { width: 1753px; flex: none; display: flex; flex-direction: column; }

        .strip {
            height: 40px;
            flex: none;
            background: #d3e3fd;
            display: flex;
            align-items: flex-end;
            font: 12.5px Roboto, sans-serif;
            color: #3c4043;
            white-space: nowrap;
        }

        .tab { height: 34px; display: flex; align-items: center; flex: none; box-sizing: border-box; }
        .tab.on { width: 105px; background: #fff; border-radius: 0 10px 0 0; justify-content: space-between; padding: 0 11px 2px 0; }

        .ctl { margin-left: auto; display: flex; align-items: center; height: 40px; gap: 36px; padding-right: 18px; align-self: flex-start; }

        .addr { height: 40px; flex: none; display: flex; align-items: flex-start; padding-top: 6px; box-sizing: border-box; }

        .pillbar {
            width: 1471px;
            height: 34px;
            background: #ebf0f9;
            border-radius: 0 17px 17px 0;
            display: flex;
            align-items: center;
            font: 13px Roboto, sans-serif;
            letter-spacing: .28px;
            color: #333;
            box-sizing: border-box;
            flex: none;
        }

        .addr .ext { display: flex; align-items: center; height: 34px; }

        .marks { flex: none; display: flex; align-items: center; overflow: hidden; border-bottom: 1px solid #e0e2e5; box-sizing: border-box; height: 41px; }

        .marks .mark { font-size: 12px; }

        .content { flex: 1; display: flex; min-height: 0; height: 902px; margin-top: -1px; }
    `;

    render() {
        const marks: Mark[] = [
            { w: 3 }, { label: 'ChatGPT', w: 58 }, { label: 'Copilot', icon: copilot, w: 78 }, { label: 'SMAVY V3', icon: globe, w: 93 }, { label: 'Board', icon: globe, w: 70 },
            { label: 'Smavy V2', icon: smavy, w: 91 }, { label: 'HTML EDITOR', icon: wIcon, w: 112 }, { label: 'PROD', icon: globe, w: 71 }, { label: 'CLient live page', icon: vIcon, w: 124 },
            { label: 'Google Docs', icon: docs, w: 105 }, { label: 'Faisal Org', icon: globe, w: 91 }, { label: 'Test Cases', icon: sheet, w: 91 }, { label: 'BUGS/ISSUES', icon: sheet, w: 100 },
        ];
        return html`
            <div class="win">
                <div class="strip">
                    <div class="tab on"><span>n</span>${x(9)}</div>
                    <div class="tab" style="padding-left:14px;gap:8px;width:241px">${globe}<span style="flex:1">Calimatic</span>${x(9)}</div>
                    <span style="width:1px;height:20px;background:#9aa0a6;margin:0 0 9px 0"></span>
                    <span style="margin:0 0 13px 12px"><svg width="12" height="12" viewBox="0 0 12 12"><path d="M6 0v12M0 6h12" stroke="#444" stroke-width="1.500"/></svg></span>
                    <div class="ctl">
                        <svg width="11" height="2" viewBox="0 0 11 2" style="margin-bottom:2px"><path d="M0 1h11" stroke="#222"/></svg>
                        <svg width="11" height="11" viewBox="0 0 11 11" fill="none" stroke="#222"><rect x=".5" y="2.500" width="8" height="8" rx="1"/><path d="M3 2.500V.5h7.500V8H8.500"/></svg>
                        <svg width="11" height="11" viewBox="0 0 11 11" fill="none" stroke="#222"><path d="M.5.500l10 10M10.500.5l-10 10"/></svg>
                    </div>
                </div>
                <div class="addr">
                    <div class="pillbar">
                        <span>isalorganization-lms.calibermatrix.com/#/families</span>
                        <span style="margin-left:auto;display:flex;gap:15px;align-items:center;padding-right:17px">
                            <svg width="18" height="10" viewBox="0 0 18 10" fill="none" stroke="#444" stroke-width="1.400"><circle cx="4.500" cy="5" r="3.500"/><path d="M8 5h9v3M13 5v2"/></svg>
                            <svg width="14" height="14" viewBox="0 0 14 14" fill="none" stroke="#444" stroke-width="1.400"><circle cx="5.500" cy="5.500" r="4.500"/><path d="M3.500 5.500h4M9 9l4.500 4.500"/></svg>
                            <svg width="15" height="14" viewBox="0 0 15 14" fill="none" stroke="#444" stroke-width="1.300"><path d="M7.500 1l2 4.300 4.800.6-3.500 3.200.9 4.700-4.200-2.400-4.200 2.400.9-4.700L.7 5.900l4.800-.6z"/></svg>
                        </span>
                    </div>
                    <div class="ext">
                        <svg style="margin-left:18px" width="16" height="16" viewBox="0 0 16 16"><path d="M1 15C3 7 8 2 15 1c0 6-4 10-10 11z" fill="#a56bd1"/></svg>
                        <svg style="margin-left:20px" width="16" height="16" viewBox="0 0 16 16"><circle cx="8" cy="9" r="6.500" fill="#4fd47f" stroke="#999"/><circle cx="5.500" cy="9" r="1.500" fill="#444"/><circle cx="10.500" cy="9" r="1.500" fill="#444"/><path d="M5 2L4 .5M11 2l1-1.500" stroke="#777"/></svg>
                        <svg style="margin-left:20px" width="15" height="15" viewBox="0 0 15 15"><rect width="15" height="15" rx="3" fill="#7c3aed"/><path d="M4 11l.7-2.500L9.500 3.500l2 2L6.500 10.500z" fill="none" stroke="#fff"/></svg>
                        <svg style="margin-left:21px" width="16" height="16" viewBox="0 0 16 16" fill="none" stroke="#333" stroke-width="1.400"><path d="M1.500 3.500h3.500V2a1.500 1.500 0 0 1 3 0v1.500h4v4H14a1.500 1.500 0 0 1 0 3h-2V14.500H1.500V11a1.500 1.500 0 0 0 0-3z"/></svg>
                        <span style="width:1px;height:16px;background:#c8d6f0;margin:0 20px 0 18px"></span>
                        <svg width="16" height="16" viewBox="0 0 16 16" fill="none" stroke="#333" stroke-width="1.500"><path d="M8 1v10M3.500 7L8 11l4.500-4M0.500 14.500h15"/></svg>
                        <span style="margin-left:18px;width:20px;height:20px;border-radius:50%;background:#415a6b;color:#fff;display:grid;place-items:center;font:11px Roboto,sans-serif">f</span>
                        <svg style="margin-left:24px" width="4" height="14" viewBox="0 0 4 14" fill="#333"><circle cx="2" cy="2" r="1.500"/><circle cx="2" cy="7" r="1.500"/><circle cx="2" cy="12" r="1.500"/></svg>
                    </div>
                </div>
                <div class="marks">${bookmarkBar(marks, 7)}</div>
                <div class="content">
                    <left-page></left-page>
                    <dev-tools></dev-tools>
                </div>
            </div>
            <family-center></family-center>
        `;
    }
}
